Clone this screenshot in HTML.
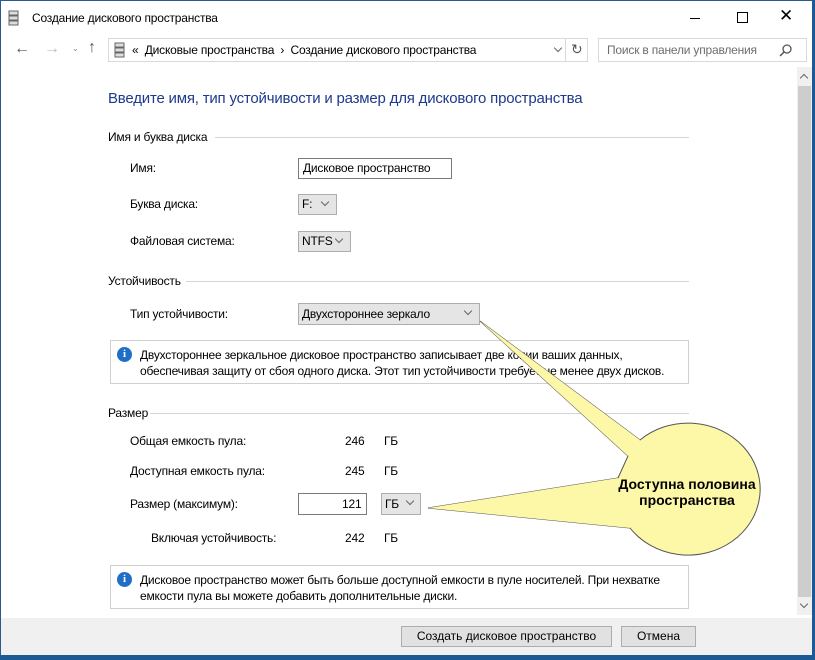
<!DOCTYPE html>
<html><head><meta charset="utf-8"><style>
*{margin:0;padding:0;box-sizing:border-box}
body{width:815px;height:660px;position:relative;background:#fff;font-family:"Liberation Sans",sans-serif;font-size:12px;color:#000;overflow:hidden}
.a{position:absolute;white-space:nowrap}
.t{position:absolute;white-space:nowrap;letter-spacing:-0.2px}
.box{position:absolute;border:1px solid #7a7a7a;background:#fff}
.sel{position:absolute;border:1px solid #adadad;background:#e5e5e5}
.line{position:absolute;height:1px;background:#d5d5d5}
.info{position:absolute;border:1px solid #d0d0d0;background:#fff}
.ic{position:absolute;width:15px;height:15px;border-radius:50%;background:#1f6fc7;color:#fff;font:bold 11px "Liberation Serif",serif;text-align:center;line-height:15px}
.btn{position:absolute;border:1px solid #adadad;background:#e1e1e1;text-align:center;line-height:19px}
.chev{position:absolute;width:6px;height:6px;border-right:1px solid #666;border-bottom:1px solid #666;transform:rotate(45deg)}
</style></head><body>
<!-- borders -->
<div class="a" style="left:0;top:0;width:815px;height:660px;border:1px solid #2b5a8c"></div>
<div class="a" style="left:0;top:655px;width:815px;height:5px;background:#1c5a96"></div>
<div class="a" style="left:812px;top:0;width:3px;height:660px;background:#1c5a96"></div>
<!-- title -->
<svg class="a" style="left:8px;top:10px" width="12" height="16"><rect x="1" y="1" width="9" height="4" fill="#ddd" stroke="#666"/><rect x="1" y="6" width="9" height="4" fill="#ddd" stroke="#666"/><rect x="1" y="11" width="9" height="4" fill="#ddd" stroke="#666"/></svg>
<div class="t" style="left:32px;top:11px">Создание дискового пространства</div>
<div class="a" style="left:690px;top:18px;width:10px;height:1px;background:#000"></div>
<div class="a" style="left:737px;top:12px;width:11px;height:11px;border:1px solid #000"></div>
<div class="a" style="left:779px;top:6px;font-size:17px">✕</div>
<!-- nav -->
<div class="a" style="left:14px;top:40px;font-size:16px;color:#555">←</div>
<div class="a" style="left:44px;top:40px;font-size:16px;color:#bbb">→</div>
<div class="a" style="left:72px;top:44px;font-size:8px;color:#888">⌄</div>
<div class="a" style="left:88px;top:39px;font-size:16px;color:#555">↑</div>
<div class="a" style="left:108px;top:38px;width:480px;height:24px;border:1px solid #d9d9d9"></div>
<div class="a" style="left:565px;top:38px;width:1px;height:24px;background:#d9d9d9"></div>
<svg class="a" style="left:114px;top:42px" width="12" height="16"><rect x="1" y="1" width="9" height="4" fill="#ddd" stroke="#666"/><rect x="1" y="6" width="9" height="4" fill="#ddd" stroke="#666"/><rect x="1" y="11" width="9" height="4" fill="#ddd" stroke="#666"/></svg>
<div class="t" style="left:132px;top:43px">«&nbsp; Дисковые пространства&nbsp; ›&nbsp; Создание дискового пространства</div>
<div class="chev" style="left:555px;top:45px"></div>
<div class="a" style="left:571px;top:41px;font-size:14px;color:#555">↻</div>
<div class="a" style="left:598px;top:38px;width:209px;height:24px;border:1px solid #d9d9d9"></div>
<div class="t" style="left:607px;top:43px;color:#6d6d6d">Поиск в панели управления</div>
<svg class="a" style="left:779px;top:43px" width="14" height="14"><circle cx="8" cy="6" r="4" fill="none" stroke="#555" stroke-width="1.3"/><line x1="5" y1="9" x2="1" y2="13" stroke="#555" stroke-width="1.5"/></svg>
<!-- scrollbar -->
<div class="a" style="left:797px;top:67px;width:15px;height:548px;background:#f0f0f0"></div>
<div class="a" style="left:798px;top:86px;width:13px;height:511px;background:#cdcdcd"></div>
<div class="chev" style="left:801px;top:75px;transform:rotate(225deg)"></div>
<div class="chev" style="left:801px;top:601px"></div>
<!-- heading -->
<div class="a" style="left:108px;top:90px;font-size:15px;color:#1e3a8a;letter-spacing:-0.2px">Введите имя, тип устойчивости и размер для дискового пространства</div>
<div class="t" style="left:108px;top:130px">Имя и буква диска</div>
<div class="line" style="left:215px;top:137px;width:474px"></div>
<div class="t" style="left:130px;top:161px">Имя:</div>
<div class="box" style="left:298px;top:158px;width:154px;height:21px"></div>
<div class="t" style="left:303px;top:161px">Дисковое пространство</div>
<div class="t" style="left:130px;top:197px">Буква диска:</div>
<div class="sel" style="left:298px;top:194px;width:39px;height:21px"></div>
<div class="t" style="left:302px;top:197px">F:</div>
<div class="chev" style="left:322px;top:199px"></div>
<div class="t" style="left:130px;top:234px">Файловая система:</div>
<div class="sel" style="left:298px;top:231px;width:53px;height:21px"></div>
<div class="t" style="left:302px;top:234px">NTFS</div>
<div class="chev" style="left:336px;top:236px"></div>
<div class="t" style="left:108px;top:274px">Устойчивость</div>
<div class="line" style="left:186px;top:281px;width:503px"></div>
<div class="t" style="left:130px;top:307px">Тип устойчивости:</div>
<div class="sel" style="left:298px;top:303px;width:182px;height:22px"></div>
<div class="t" style="left:302px;top:307px">Двухстороннее зеркало</div>
<div class="chev" style="left:465px;top:308px"></div>
<div class="info" style="left:110px;top:340px;width:579px;height:44px"></div>
<div class="ic" style="left:117px;top:347px">i</div>
<div class="t" style="left:140px;top:347px;line-height:16px">Двухстороннее зеркальное дисковое пространство записывает две копии ваших данных,<br>обеспечивая защиту от сбоя одного диска. Этот тип устойчивости требует не менее двух дисков.</div>
<div class="t" style="left:108px;top:406px">Размер</div>
<div class="line" style="left:150px;top:413px;width:539px"></div>
<div class="t" style="left:130px;top:434px">Общая емкость пула:</div>
<div class="t" style="left:345px;top:434px">246</div><div class="t" style="left:384px;top:434px">ГБ</div>
<div class="t" style="left:130px;top:464px">Доступная емкость пула:</div>
<div class="t" style="left:345px;top:464px">245</div><div class="t" style="left:384px;top:464px">ГБ</div>
<div class="t" style="left:130px;top:497px">Размер (максимум):</div>
<div class="box" style="left:298px;top:493px;width:69px;height:22px"></div>
<div class="t" style="left:342px;top:497px">121</div>
<div class="sel" style="left:381px;top:493px;width:40px;height:22px"></div>
<div class="t" style="left:385px;top:497px">ГБ</div>
<div class="chev" style="left:407px;top:498px"></div>
<div class="t" style="left:151px;top:531px">Включая устойчивость:</div>
<div class="t" style="left:345px;top:531px">242</div><div class="t" style="left:384px;top:531px">ГБ</div>
<div class="info" style="left:110px;top:565px;width:579px;height:44px"></div>
<div class="ic" style="left:117px;top:572px">i</div>
<div class="t" style="left:140px;top:572px;line-height:16px">Дисковое пространство может быть больше доступной емкости в пуле носителей. При нехватке<br>емкости пула вы можете добавить дополнительные диски.</div>
<!-- footer -->
<div class="a" style="left:1px;top:618px;width:811px;height:37px;background:#f0f0f0"></div>
<div class="btn" style="left:401px;top:626px;width:211px;height:21px">Создать дисковое пространство</div>
<div class="btn" style="left:621px;top:626px;width:75px;height:21px">Отмена</div>
<!-- balloon -->
<svg class="a" style="left:0;top:0" width="815" height="660">
<path d="M480,321 L640,440 A72,66 0 1 1 630,528 L428,508 L618,478 L628,456 Z" fill="#fdf7a8" stroke="#555" stroke-width="1"/>
<path d="M480,321 L640,440 L628,456 Z M428,508 L618,478 L630,528 Z" fill="#fdf7a8"/>
</svg>
<div class="a" style="left:612px;top:476px;font-weight:bold;font-size:14px;text-align:center;line-height:16px;width:150px">Доступна половина<br>пространства</div>
</body></html>
